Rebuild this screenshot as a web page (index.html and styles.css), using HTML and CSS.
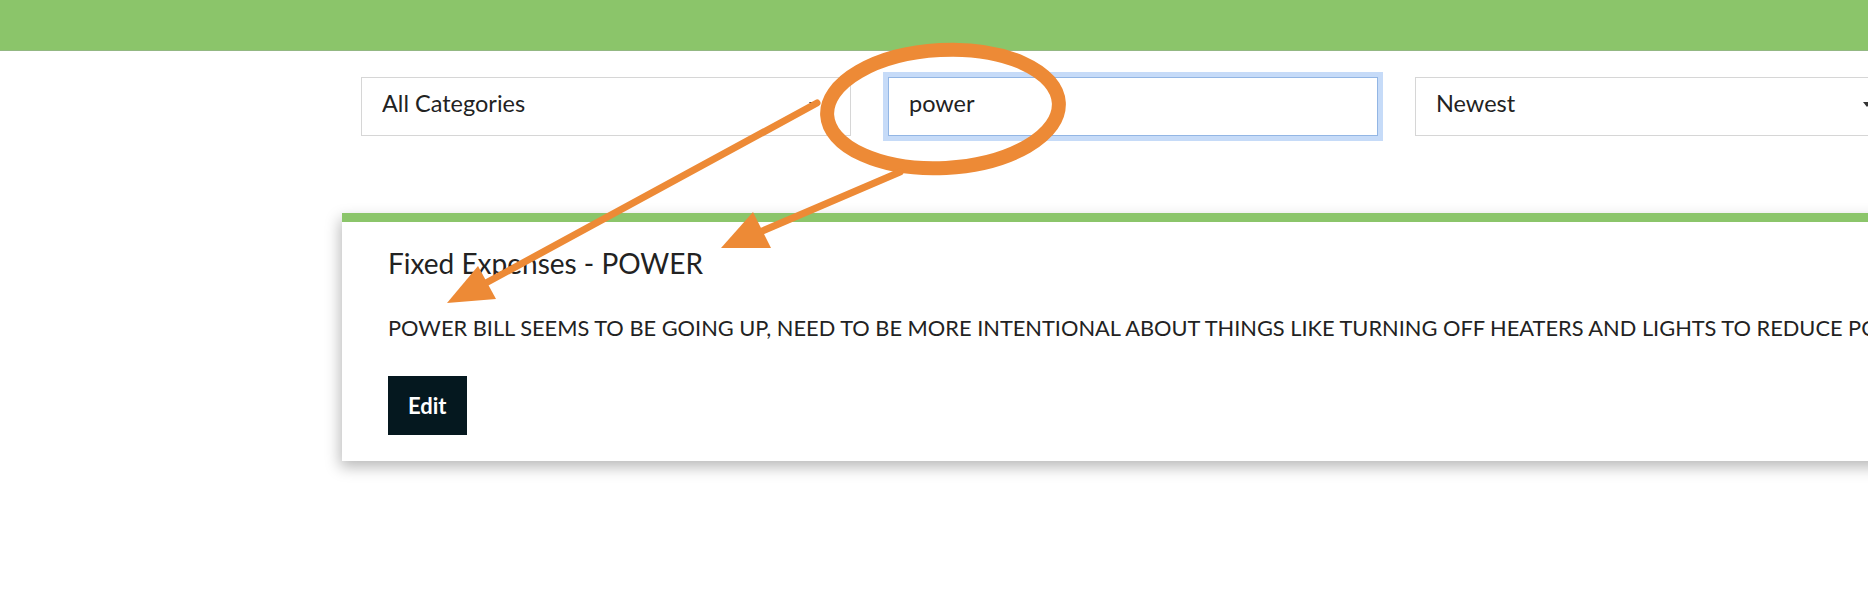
FILE: index.html
```html
<!DOCTYPE html>
<html lang="en">
<head>
    <meta charset="UTF-8">
    <meta name="viewport" content="width=device-width, initial-scale=1.0">
    <title>Expense Notes</title>
    <link rel="stylesheet" href="styles.css">
</head>
<body>
    <!-- Top bar -->
    <header class="topbar"></header>

    <main class="page">
        <!-- Filter row: category, search, sort -->
        <div class="filters">
            <div class="select-wrap">
                <select class="field">
                    <option>All Categories</option>
                </select>
            </div>
            <input type="text" class="field search" value="power">
            <div class="select-wrap">
                <select class="field">
                    <option>Newest</option>
                </select>
            </div>
        </div>

        <!-- Note card -->
        <section class="note-card">
            <h3 class="note-title">Fixed Expenses - POWER</h3>
            <p class="note-text">POWER BILL SEEMS TO BE GOING UP, NEED TO BE MORE INTENTIONAL ABOUT THINGS LIKE TURNING OFF HEATERS AND LIGHTS TO REDUCE POWER USAGE.</p>
            <button class="btn-edit">Edit</button>
        </section>
    </main>

    <!-- Hand-drawn callout marks -->
    <svg class="marks" width="1868" height="612" viewBox="0 0 1868 612">
        <g fill="none" stroke="#ed8a36" stroke-linecap="round">
            <ellipse cx="943" cy="109" rx="116" ry="59" stroke-width="14" transform="rotate(-3 943 109)"/>
            <line x1="817" y1="103" x2="484" y2="284" stroke-width="7"/>
            <line x1="900" y1="172" x2="760" y2="232" stroke-width="7"/>
        </g>
        <g fill="#ed8a36">
            <polygon points="447,303 496,299 478,266"/>
            <polygon points="721,248 771,248 753,212"/>
        </g>
    </svg>
</body>
</html>
```

FILE: styles.css
```css
html {
    overflow: hidden;
}
body {
    margin: 0;
    position: relative;
    min-height: 612px;
    background: #fff;
    font-family: Lato, "Open Sans", sans-serif;
    color: #222;
}
.topbar {
    height: 50px;
    background-color: #8bc56a;
    border-bottom: 1px solid #93b883;
}
.page {
    padding-left: 342px;
}
.filters {
    display: grid;
    grid-template-columns: repeat(3, 490px);
    column-gap: 37px;
    margin: 26px 0 0 19px;
}
.field {
    box-sizing: border-box;
    width: 100%;
    height: 59px;
    padding: 0 20px 7px;
    border: 1px solid #d6d6d6;
    background: #fff;
    font-family: inherit;
    font-size: 23.5px;
    color: #222;
    outline: none;
    appearance: none;
    -webkit-appearance: none;
    border-radius: 0;
}
.select-wrap {
    position: relative;
}
.select-wrap::after {
    content: "";
    position: absolute;
    right: 34px;
    top: 25px;
    border-left: 4px solid transparent;
    border-right: 4px solid transparent;
    border-top: 5px solid #333;
}
.search {
    border-color: #93b6e4;
    box-shadow: 0 0 0 5px #c6dbf8;
}
.note-card {
    width: 1600px;
    margin-top: 77px;
    padding: 25px 46px 26px;
    box-sizing: border-box;
    border-top: 9px solid #8bc56a;
    background: #fff;
    box-shadow: -2px 6px 14px rgba(0, 0, 0, 0.28);
}
.note-title {
    margin: 0 0 31px;
    font-size: 28px;
    font-weight: normal;
    line-height: 1.2;
}
.note-text {
    margin: 0 0 32px;
    font-size: 21.8px;
    line-height: 1.5;
    white-space: nowrap;
}
.btn-edit {
    height: 59px;
    padding: 0 20px;
    border: none;
    background-color: #05181f;
    color: #fff;
    font-family: inherit;
    font-size: 22px;
    font-weight: bold;
}
.marks {
    position: absolute;
    left: 0;
    top: 0;
    pointer-events: none;
}
```
